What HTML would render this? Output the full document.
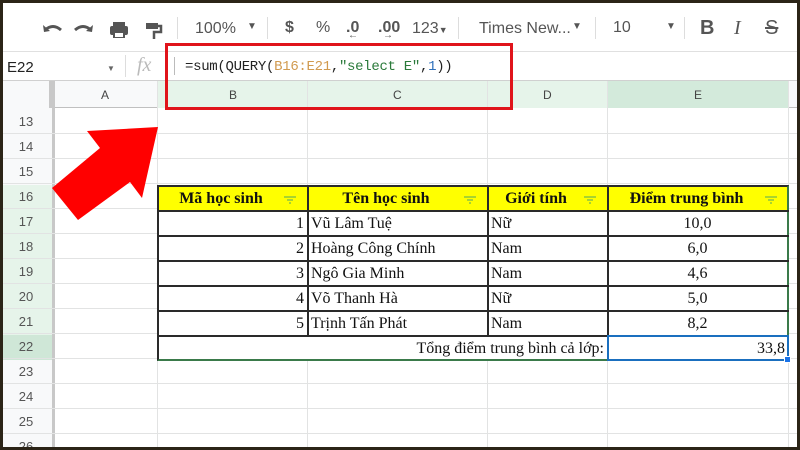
<!DOCTYPE html>
<html><head><meta charset="utf-8"><style>
*{margin:0;padding:0;box-sizing:border-box}
body{width:800px;height:450px;overflow:hidden;background:#2b2417;position:relative;font-family:"Liberation Sans",sans-serif}
#app{position:absolute;left:3px;top:3px;width:794px;height:444px;background:#fff;overflow:hidden}
.a{position:absolute}
.tb{color:#555;font-size:16px}
.hl{position:absolute;background:#e2e3e3}
.t{font-family:"Liberation Serif",serif;font-size:16px;color:#111}
</style></head><body>
<div id="app">
<div class="a" style="left:0;top:0;width:794px;height:49px;background:#fff;border-bottom:1px solid #e0e0e0"></div>
<svg class="a" style="left:38px;top:16px" width="130" height="22" viewBox="0 0 130 22">
<path d="M4 11 Q12 4 20 11" stroke="#555" stroke-width="3" fill="none"/><path d="M2 6 L3 13 L9 12Z" fill="#555"/>
<path d="M34 11 Q42 4 50 11" stroke="#555" stroke-width="3" fill="none"/><path d="M52 6 L51 13 L45 12Z" fill="#555"/>
<rect x="69" y="7" width="18" height="9" rx="2" fill="#555"/><rect x="72" y="3" width="12" height="4" fill="#555"/><rect x="72" y="13" width="12" height="6" fill="#555"/><rect x="74" y="14" width="8" height="4" fill="#fff"/>
<rect x="105" y="4" width="12" height="6" fill="#555"/><path d="M117 7 h3 v6 h-7 v7" stroke="#555" stroke-width="2.5" fill="none"/>
</svg>
<div class="a" style="left:174px;top:14px;width:1px;height:22px;background:#ddd"></div>
<div class="a tb" style="left:192px;top:17px">100%</div>
<div class="a tb" style="left:244px;top:18px;font-size:10px">▼</div>
<div class="a" style="left:264px;top:14px;width:1px;height:22px;background:#ddd"></div>
<div class="a tb" style="left:282px;top:16px;font-weight:bold">$</div>
<div class="a tb" style="left:313px;top:16px">%</div>
<div class="a tb" style="left:343px;top:16px;font-weight:bold">.0</div>
<div class="a tb" style="left:345px;top:27px;font-size:10px">←</div>
<div class="a tb" style="left:375px;top:16px;font-weight:bold">.00</div>
<div class="a tb" style="left:380px;top:27px;font-size:10px">→</div>
<div class="a tb" style="left:409px;top:17px">123<span style="font-size:9px">▼</span></div>
<div class="a" style="left:455px;top:14px;width:1px;height:22px;background:#ddd"></div>
<div class="a tb" style="left:476px;top:17px">Times New...</div>
<div class="a tb" style="left:569px;top:18px;font-size:10px">▼</div>
<div class="a" style="left:592px;top:14px;width:1px;height:22px;background:#ddd"></div>
<div class="a tb" style="left:610px;top:16px">10</div>
<div class="a tb" style="left:663px;top:18px;font-size:10px">▼</div>
<div class="a" style="left:681px;top:14px;width:1px;height:22px;background:#ddd"></div>
<div class="a tb" style="left:697px;top:14px;font-size:20px;font-weight:bold">B</div>
<div class="a tb" style="left:731px;top:14px;font-size:20px;font-style:italic;font-family:'Liberation Serif',serif">I</div>
<div class="a tb" style="left:762px;top:14px;font-size:20px;text-decoration:line-through">S</div>
<div class="a" style="left:0;top:49px;width:794px;height:29px;border-bottom:1px solid #d0d0d0"></div>
<div class="a" style="left:4px;top:56px;font-size:15px;color:#222">E22</div>
<div class="a" style="left:104px;top:61px;font-size:8px;color:#666">▼</div>
<div class="a" style="left:122px;top:52px;width:1px;height:22px;background:#ddd"></div>
<div class="a" style="left:134px;top:51px;font-size:20px;color:#bbb;font-style:italic;font-family:'Liberation Serif',serif">fx</div>
<div class="a" style="left:171px;top:54px;width:1px;height:18px;background:#bbb"></div>
<div class="a" style="left:182px;top:56px;font-family:'Liberation Mono',monospace;font-size:14px;color:#222;letter-spacing:-0.3px">=sum(QUERY(<span style="color:#d19a4f">B16:E21</span>,<span style="color:#2a7a3a">"select E"</span>,<span style="color:#2d6fba">1</span>))</div>
<div class="a" style="left:0;top:78px;width:794px;height:27px;background:#f8f9fa;border-bottom:1px solid #c0c0c0"></div>
<div class="a" style="left:154px;top:78px;width:330px;height:27px;background:#e6f4ea"></div>
<div class="a" style="left:484px;top:78px;width:120px;height:27px;background:#e6f4ea"></div>
<div class="a" style="left:604px;top:78px;width:181px;height:27px;background:#d3eadb"></div>
<div class="a" style="left:49px;top:78px;width:3px;height:366px;background:#c8c8c8"></div>
<div class="a" style="left:0;top:78px;width:49px;height:27px;background:#f8f9fa;border-right:3px solid #c8c8c8"></div>
<div class="a" style="left:0;top:105px;width:49px;height:340px;background:#f8f9fa"></div>
<div class="a" style="left:0;top:182px;width:49px;height:25px;background:#e6f4ea"></div>
<div class="a" style="left:0;top:207px;width:49px;height:125px;background:#e6f4ea"></div>
<div class="a" style="left:0;top:332px;width:49px;height:25px;background:#cfe7d7"></div>
<div class="a" style="left:98px;top:85px;font-size:12px;color:#444">A</div>
<div class="a" style="left:226px;top:85px;font-size:12px;color:#444">B</div>
<div class="a" style="left:390px;top:85px;font-size:12px;color:#444">C</div>
<div class="a" style="left:540px;top:85px;font-size:12px;color:#444">D</div>
<div class="a" style="left:691px;top:85px;font-size:12px;color:#444">E</div>
<div class="hl" style="left:154px;top:78px;width:1px;height:366px"></div>
<div class="hl" style="left:304px;top:78px;width:1px;height:366px"></div>
<div class="hl" style="left:484px;top:78px;width:1px;height:366px"></div>
<div class="hl" style="left:604px;top:78px;width:1px;height:366px"></div>
<div class="hl" style="left:785px;top:78px;width:1px;height:366px"></div>
<div id="rows"></div>
<script>
var r=document.getElementById('rows'),h='';
for(var i=0;i<14;i++){var y=105+i*25;h+='<div class="hl" style="left:0;top:'+(y+25)+'px;width:794px;height:1px"></div><div class="a" style="left:0;width:46px;text-align:center;top:'+(y+6)+'px;font-size:13px;color:#555">'+(13+i)+'</div>';}
r.innerHTML=h;
</script>
<div class="a" style="left:155px;top:207px;width:630px;height:151px;background:#fff"></div>
<div class="a" style="left:154px;top:182px;width:632px;height:26px;background:#ffff00"></div>
<div class="a" style="left:154px;top:182px;width:632px;height:176px;border:2px solid #2a2a2a;border-color:#2a2a2a #3a7a4a #3a7a4a #2a2a2a"></div>
<div id="tbl"></div>
<script>
var d=[["1","Vũ Lâm Tuệ","Nữ","10,0"],["2","Hoàng Công Chính","Nam","6,0"],["3","Ngô Gia Minh","Nam","4,6"],["4","Võ Thanh Hà","Nữ","5,0"],["5","Trịnh Tấn Phát","Nam","8,2"]];
var h='';
[304,484,604].forEach(function(x){h+='<div class="a" style="left:'+x+'px;top:182px;width:1.5px;height:151px;background:#2a2a2a"></div>';});
h+='<div class="a" style="left:604px;top:332px;width:2px;height:26px;background:#2a2a2a"></div>';
for(var i=0;i<6;i++){h+='<div class="a" style="left:154px;top:'+(207+i*25)+'px;width:632px;height:1.5px;background:#2a2a2a"></div>';}
var hd=[["Mã học sinh",154,150],["Tên học sinh",304,180],["Giới tính",484,120],["Điểm trung bình",604,181]];
hd.forEach(function(c){h+='<div class="a t" style="font-weight:bold;left:'+c[1]+'px;width:'+(c[2]-22)+'px;text-align:center;top:187px">'+c[0]+'</div><svg class="a" style="left:'+(c[1]+c[2]-24)+'px;top:192px" width="14" height="10"><path d="M1 2h12M4 5h6M6 8h2" stroke="#8cc63f" stroke-width="1.6"/></svg>';});
d.forEach(function(row,i){var y=212+i*25;
h+='<div class="a t" style="left:154px;width:147px;text-align:right;top:'+y+'px">'+row[0]+'</div>';
h+='<div class="a t" style="left:308px;top:'+y+'px">'+row[1]+'</div>';
h+='<div class="a t" style="left:488px;top:'+y+'px">'+row[2]+'</div>';
h+='<div class="a t" style="left:604px;width:181px;text-align:center;top:'+y+'px">'+row[3]+'</div>';});
h+='<div class="a t" style="left:154px;width:447px;text-align:right;top:337px">Tổng điểm trung bình cả lớp:</div>';
h+='<div class="a" style="left:604px;top:332px;width:182px;height:26px;border:2px solid #1a6fbf"></div>';
h+='<div class="a t" style="left:604px;width:178px;text-align:right;top:337px">33,8</div>';
h+='<div class="a" style="left:781px;top:353px;width:7px;height:7px;background:#1a73e8;border:1px solid #fff"></div>';
document.getElementById('tbl').innerHTML=h;
</script>
<div class="a" style="left:162px;top:40px;width:348px;height:67px;border:3px solid #e0141b"></div>
<svg class="a" style="left:-3px;top:-3px" width="200" height="240"><polygon points="158,127 142,198 130,182 78,220 52,188 100,148 87,131" fill="#ff0000"/></svg>
</div>
</body></html>
